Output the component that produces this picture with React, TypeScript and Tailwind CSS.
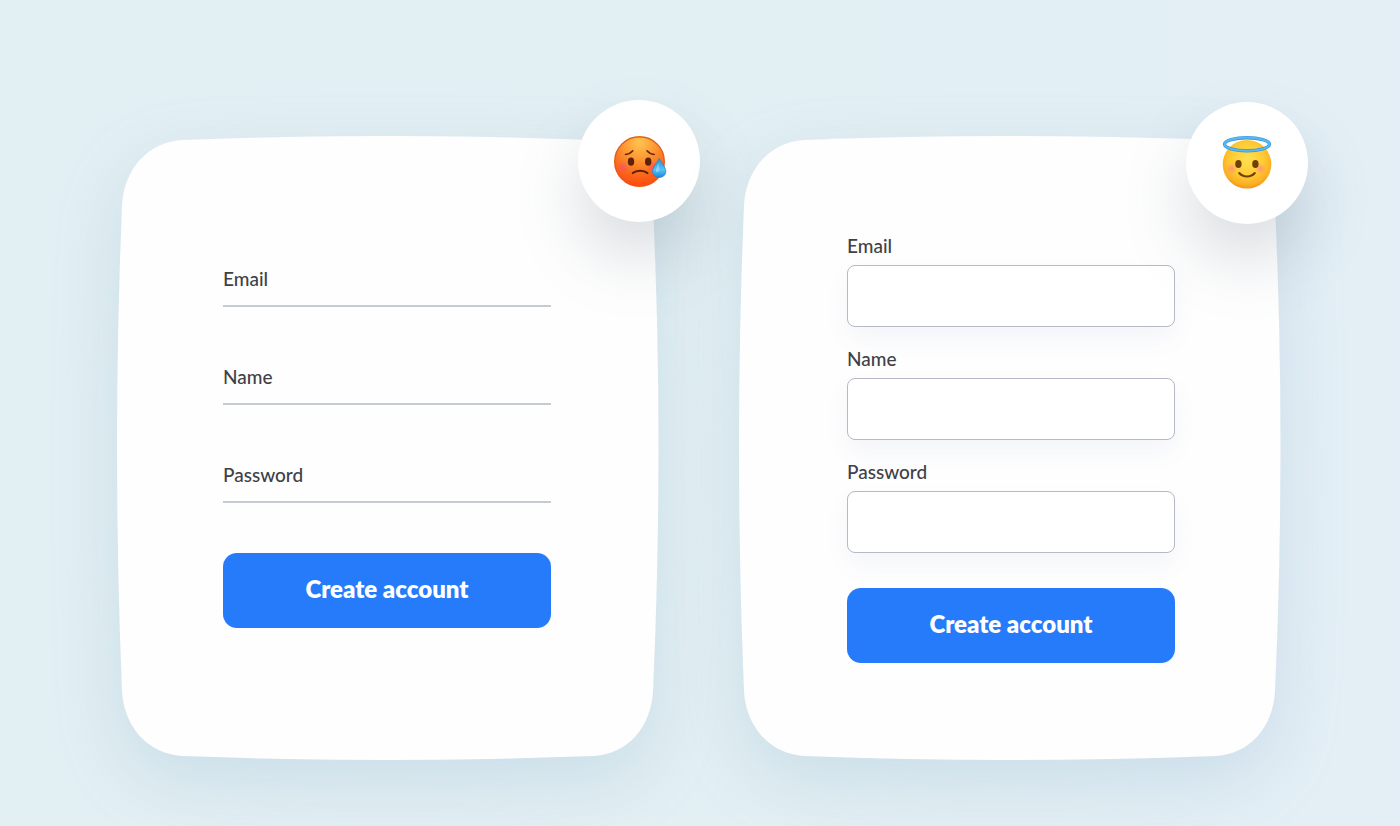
import React, { useId, useState } from 'react';

type Variant = 'underline' | 'boxed';

interface FieldProps {
    label: string;
    type: string;
    variant: Variant;
    value: string;
    onChange: (value: string) => void;
}

const FIELDS = [
    { key: 'email', label: 'Email', type: 'email' },
    { key: 'name', label: 'Name', type: 'text' },
    { key: 'password', label: 'Password', type: 'password' },
] as const;

type FieldKey = (typeof FIELDS)[number]['key'];

function SadSweatFace() {
    return (
        <svg viewBox="0 0 56 56" className="size-14" role="img" aria-label="Sad face">
            <defs>
                <radialGradient id="sad-face" cx="0.5" cy="0.12" r="0.9">
                    <stop offset="0" stopColor="#ffc44f" />
                    <stop offset="0.35" stopColor="#fd9a35" />
                    <stop offset="0.7" stopColor="#fb6a1c" />
                    <stop offset="1" stopColor="#fa480c" />
                </radialGradient>
                <linearGradient id="sad-rim" x1="0" y1="0" x2="0" y2="1">
                    <stop offset="0" stopColor="#dc661d" />
                    <stop offset="1" stopColor="#f94e12" />
                </linearGradient>
                <radialGradient id="sad-blush">
                    <stop offset="0" stopColor="#fb4f70" stopOpacity="0.8" />
                    <stop offset="1" stopColor="#fb4f70" stopOpacity="0" />
                </radialGradient>
                <linearGradient id="sad-drop" x1="0" y1="0" x2="0" y2="1">
                    <stop offset="0" stopColor="#2f8fd6" />
                    <stop offset="0.6" stopColor="#54c3f7" />
                    <stop offset="1" stopColor="#1c86da" />
                </linearGradient>
            </defs>
            <circle cx="28.5" cy="28.5" r="24.8" fill="url(#sad-face)" stroke="url(#sad-rim)" strokeWidth="1.4" />
            <circle cx="12" cy="34.5" r="6" fill="url(#sad-blush)" />
            <circle cx="42.5" cy="34" r="6" fill="url(#sad-blush)" />
            <g fill="none" stroke="#6b2608" strokeWidth="1.6" strokeLinecap="round">
                <path d="M14.5 21.5C17.5 21.2 20 20 21.8 17.8" />
                <path d="M36 17.8C37.8 20 40.4 21.2 43.2 21.5" />
            </g>
            <ellipse cx="20" cy="28.7" rx="3.2" ry="4.1" fill="#5d2107" />
            <ellipse cx="37.2" cy="28.7" rx="3.2" ry="4.1" fill="#5d2107" />
            <path d="M21.8 40C25.2 37 33 37 36.4 40" fill="none" stroke="#5d2107" strokeWidth="2.2" strokeLinecap="round" />
            <path
                d="M48.2 25.4C50 29.4 54.8 34.2 54.8 38.4C54.8 42 51.9 44.4 48.2 44.4C44.5 44.4 41.6 42 41.6 38.4C41.6 34.2 46.4 29.4 48.2 25.4Z"
                fill="url(#sad-drop)"
                stroke="#2384cc"
                strokeWidth="0.8"
            />
            <path d="M47.8 30.5C46 34 44.4 36.5 45 38.6C45.8 40.4 48.4 38.6 48.4 36Z" fill="#b8ecff" opacity="0.5" />
        </svg>
    );
}

function HaloFace() {
    return (
        <svg viewBox="0 0 56 56" className="size-14" role="img" aria-label="Smiling face with halo">
            <defs>
                <radialGradient id="halo-face" cx="0.5" cy="0.4" r="0.62">
                    <stop offset="0" stopColor="#ffe04f" />
                    <stop offset="0.55" stopColor="#ffcb35" />
                    <stop offset="0.85" stopColor="#fbae22" />
                    <stop offset="1" stopColor="#f18b12" />
                </radialGradient>
                <radialGradient id="halo-blush">
                    <stop offset="0" stopColor="#ff8f80" stopOpacity="0.9" />
                    <stop offset="1" stopColor="#ff8f80" stopOpacity="0" />
                </radialGradient>
            </defs>
            <circle cx="28" cy="29.3" r="24.3" fill="url(#halo-face)" />
            <circle cx="12.7" cy="33.7" r="5.6" fill="url(#halo-blush)" />
            <circle cx="41.3" cy="33.7" r="5.6" fill="url(#halo-blush)" />
            <ellipse cx="19.4" cy="29" rx="3.2" ry="4.1" fill="#6e4206" />
            <ellipse cx="36.4" cy="29" rx="3.2" ry="4.1" fill="#6e4206" />
            <path d="M20.2 38C24 42.6 32 42.6 35.8 38" fill="none" stroke="#6e4206" strokeWidth="2.1" strokeLinecap="round" />
            <ellipse cx="28" cy="9.2" rx="22.4" ry="6.5" fill="none" stroke="#3598dc" strokeWidth="3.4" />
            <ellipse cx="28" cy="9.2" rx="22.3" ry="6.6" fill="none" stroke="#58b9f2" strokeWidth="2" />
        </svg>
    );
}

// Panel with softly bulging sides, stretched to whatever size the card has
function CardShape() {
    return (
        <svg
            viewBox="0 0 542 624"
            preserveAspectRatio="none"
            aria-hidden="true"
            className="absolute inset-0 -z-10 size-full overflow-visible drop-shadow-[0_24px_32px_rgba(125,165,195,0.22)]"
        >
            <path
                d="M65 4Q271 -4 477 4C511 6 534 33 536 69Q547 312 536 555C534 591 511 618 477 620Q271 628 65 620C31 618 7 591 5 555Q-5 312 5 69C7 33 31 6 65 4Z"
                fill="#fefefe"
            />
        </svg>
    );
}

function Field({ label, type, variant, value, onChange }: FieldProps) {
    const id = useId();
    const boxed = variant === 'boxed';

    return (
        <div className={boxed ? 'flex flex-col gap-[7px]' : 'flex flex-col'}>
            <label htmlFor={id} className="text-[19px] leading-6 font-medium text-[#3f4146]">
                {label}
            </label>
            <input
                id={id}
                type={type}
                value={value}
                onChange={(e) => onChange(e.target.value)}
                className={
                    boxed
                        ? 'h-[62px] w-full rounded-lg border border-[#b7b8c8] bg-white px-4 text-lg shadow-[0_12px_24px_rgba(90,100,170,0.06)] focus:outline-none focus:ring-2 focus:ring-blue-500'
                        : 'h-4 w-full border-b-2 border-[#c5cad3] bg-transparent text-sm focus:outline-none focus:border-blue-500'
                }
            />
        </div>
    );
}

function AccountForm({ variant }: { variant: Variant }) {
    const [form, setForm] = useState({ email: '', name: '', password: '' });

    function handleChange(key: FieldKey, value: string) {
        setForm((prev) => ({ ...prev, [key]: value }));
    }

    const boxed = variant === 'boxed';

    return (
        <form
            onSubmit={(e: React.FormEvent) => e.preventDefault()}
            className={boxed ? 'pt-[98px] pr-[106px] pb-24 pl-[108px]' : 'pt-[131px] pr-[108px] pb-24 pl-[106px]'}
        >
            {/* Fields */}
            <div className={boxed ? 'flex flex-col gap-5' : 'flex flex-col gap-[58px]'}>
                {FIELDS.map((field) => (
                    <Field
                        key={field.key}
                        label={field.label}
                        type={field.type}
                        variant={variant}
                        value={form[field.key]}
                        onChange={(value) => handleChange(field.key, value)}
                    />
                ))}
            </div>

            {/* Submit */}
            <button
                type="submit"
                className={`${boxed ? 'mt-[35px]' : 'mt-[50px]'} h-[75px] w-full rounded-[14px] bg-[#267bfb] pb-1 text-2xl font-extrabold text-white hover:bg-blue-600`}
            >
                Create account
            </button>
        </form>
    );
}

const BADGE =
    'absolute flex size-[122px] items-center justify-center rounded-full bg-white shadow-[0_36px_64px_rgba(90,110,125,0.22)]';

export default function App() {
    return (
        <main className="flex min-h-screen items-start gap-20 bg-linear-to-r from-[#e2eff3] via-[#e2eff4] via-80% to-[#e4eef6] pt-[136px] pr-[119px] pb-[66px] pl-[117px] font-['Lato',sans-serif]">
            <section className="relative isolate min-h-[624px] flex-1">
                <CardShape />
                <AccountForm variant="underline" />
                <div className={`${BADGE} -top-9 -right-[41px]`}>
                    <SadSweatFace />
                </div>
            </section>

            <section className="relative isolate min-h-[624px] flex-1">
                <CardShape />
                <AccountForm variant="boxed" />
                <div className={`${BADGE} -top-[34px] -right-[27px]`}>
                    <HaloFace />
                </div>
            </section>
        </main>
    );
}
